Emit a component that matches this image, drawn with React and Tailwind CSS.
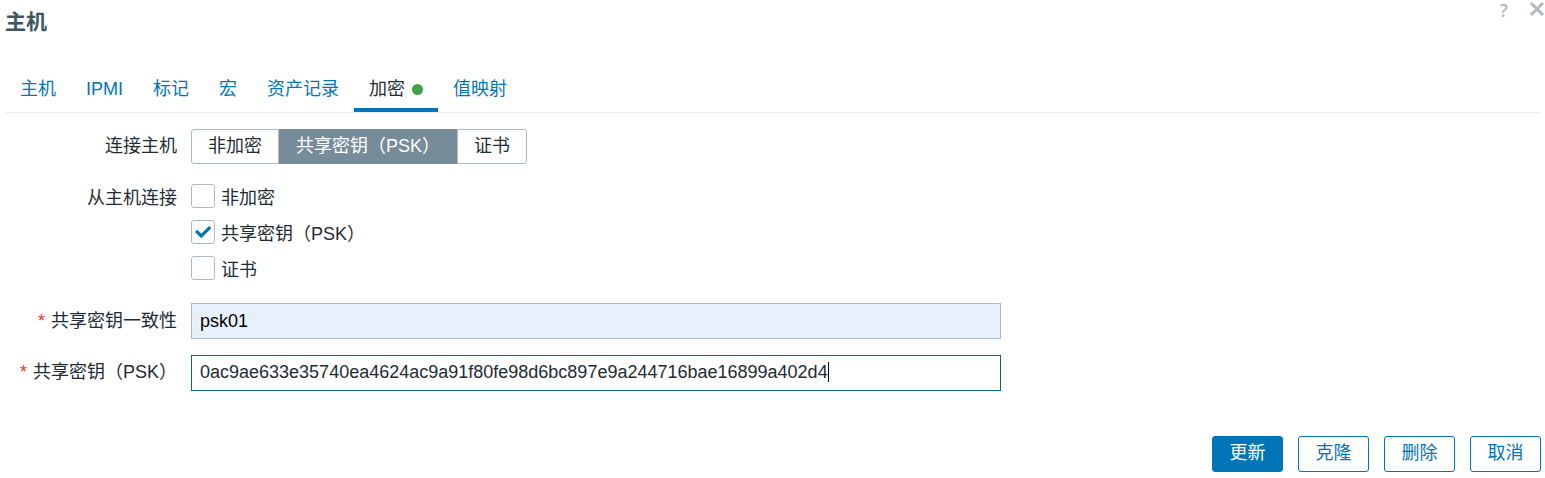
import { useState } from "react";

const TABS = ["主机", "IPMI", "标记", "宏", "资产记录", "加密", "值映射"];
const MODES = ["非加密", "共享密钥（PSK）", "证书"];

function Tab({ label, active, onSelect }) {
  return (
    <button
      type="button"
      role="tab"
      aria-selected={active}
      onClick={onSelect}
      className={
        active
          ? "flex h-10 items-center border-b-4 border-[#0275b8] px-[15px] pb-[3px] text-[#1f2c33]"
          : "flex h-10 items-center border-b-4 border-transparent px-[15px] pb-[3px] text-[#0275b8]"
      }
    >
      {label}
      {label === "加密" && <span className="ml-[7px] mt-px size-[11px] rounded-full bg-[#429e47]" />}
    </button>
  );
}

function Mark({ label, checked, onChange }) {
  return (
    <label className="flex h-6 items-center gap-[6px]">
      <span className="grid size-6 shrink-0 place-items-center">
        <input
          type="checkbox"
          checked={checked}
          onChange={onChange}
          className="col-start-1 row-start-1 size-6 appearance-none rounded-[3px] border border-[#acbbc2] bg-white"
        />
        {checked && (
          <svg viewBox="0 0 24 24" className="pointer-events-none col-start-1 row-start-1 size-6" fill="none" stroke="#0275b8" strokeWidth="3.2">
            <path d="M5 10.8 L10.3 16 L19.2 7.2" />
          </svg>
        )}
      </span>
      <span className="pt-[3px]">{label}</span>
    </label>
  );
}

function Required() {
  return <span className="mr-[6px] text-[18px] text-[#e33734]">*</span>;
}

export default function App() {
  const [tab, setTab] = useState("加密");
  const [mode, setMode] = useState(MODES[1]);
  const [accepted, setAccepted] = useState([MODES[1]]);
  const [identity, setIdentity] = useState("psk01");
  const [psk, setPsk] = useState("0ac9ae633e35740ea4624ac9a91f80fe98d6bc897e9a244716bae16899a402d4");

  const toggle = (m) =>
    setAccepted((list) => (list.includes(m) ? list.filter((x) => x !== m) : [...list, m]));

  return (
    <main className="bg-white pl-[5px] font-['Liberation_Sans','Noto_Sans_CJK_SC',sans-serif] text-[18px] font-normal leading-6 text-[#1f2c33]">
      <header className="flex h-[72px] items-start justify-between">
        <h1 className="pt-[10px] text-[21px] font-bold text-[#3c5563]">主机</h1>
        <div className="flex items-start gap-[21px] text-[#acbbc2]">
          <a href="#help" aria-label="帮助" className="font-['Open_Sans',sans-serif] text-[18px] font-semibold leading-5">
            ?
          </a>
          <button type="button" aria-label="关闭" className="pt-px">
            <svg viewBox="0 0 16 16" className="size-4" fill="none" stroke="currentColor" strokeWidth="3">
              <path d="M2 2 L14 14 M14 2 L2 14" />
            </svg>
          </button>
        </div>
      </header>

      <div role="tablist" className="mr-1 flex border-b border-[#ebeef0]">
        {TABS.map((t) => (
          <Tab key={t} label={t} active={t === tab} onSelect={() => setTab(t)} />
        ))}
      </div>

      <form onSubmit={(e) => e.preventDefault()} className="pr-1">
        <div className="grid grid-cols-[172px_minmax(0,810px)] gap-x-[14px] pt-4">
          <span id="connect" className="pt-[5px] text-right">连接主机</span>
          <div role="radiogroup" aria-labelledby="connect" className="mb-5 flex">
            {MODES.map((m) => (
              <label
                key={m}
                className={
                  m === mode
                    ? "h-[35px] border border-[#768d99] bg-[#768d99] px-4 pt-1 text-white"
                    : "h-[35px] border border-[#acbbc2] px-4 pt-1 first:rounded-l-[3px] last:rounded-r-[3px]"
                }
              >
                <input type="radio" name="mode" checked={m === mode} onChange={() => setMode(m)} className="sr-only" />
                {m}
              </label>
            ))}
          </div>

          <span id="accept" className="pt-[2px] text-right">从主机连接</span>
          <div role="group" aria-labelledby="accept" className="mb-[23px] flex flex-col items-start gap-3">
            {MODES.map((m) => (
              <Mark key={m} label={m} checked={accepted.includes(m)} onChange={() => toggle(m)} />
            ))}
          </div>

          <label htmlFor="identity" className="pt-[6px] text-right">
            <Required />
            共享密钥一致性
          </label>
          <input
            id="identity"
            type="text"
            value={identity}
            onChange={(e) => setIdentity(e.target.value)}
            className="mb-4 h-9 w-full border border-[#acbbc2] bg-[#e8f0fe] px-2 text-black outline-none"
          />

          <label htmlFor="psk" className="pt-[5px] text-right">
            <Required />
            共享密钥（PSK）
          </label>
          <div className="flex h-9 items-center overflow-hidden border border-[#0a6496] px-2 pb-[2px]">
            <input
              id="psk"
              type="text"
              value={psk}
              onChange={(e) => setPsk(e.target.value)}
              className="h-6 min-w-0 caret-transparent outline-none field-sizing-content"
            />
            <span className="h-5 w-px shrink-0 bg-black" />
          </div>
        </div>

        <footer className="flex justify-end gap-[15px] pt-[45px]">
          <button type="submit" className="h-9 min-w-[71px] rounded-[3px] border border-[#0275b8] bg-[#0275b8] px-4 pb-[2px] text-white">
            更新
          </button>
          {["克隆", "删除", "取消"].map((b) => (
            <button key={b} type="button" className="h-9 min-w-[71px] rounded-[3px] border border-[#0275b8] px-4 pb-[2px] text-[#0275b8]">
              {b}
            </button>
          ))}
        </footer>
      </form>
    </main>
  );
}
